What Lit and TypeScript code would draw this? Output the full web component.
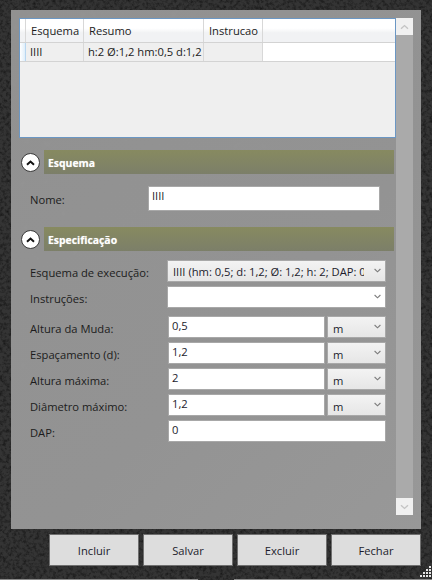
import { LitElement, html, css, svg } from "lit";
import { customElement } from "lit/decorators.js";

const chevronDown = html`<svg class="chev" width="7" height="5" viewBox="0 0 7 5"><path d="M.6 1 3.5 3.8 6.4 1" fill="none" stroke="#7c7c7c" stroke-width="1.1"/></svg>`;
const noise = (id: string, freq: number, a: number, b: number, c: number) => html`<svg class="tex" width="100%" height="100%" aria-hidden="true">
  <filter id=${id} x="0" y="0" width="100%" height="100%">
    <feTurbulence type="fractalNoise" baseFrequency=${freq} numOctaves="4" seed="7"/>
    <feColorMatrix type="matrix" values=${`0 0 0 0 ${c} 0 0 0 0 ${c} 0 0 0 0 ${c} ${a} 0 0 0 ${b}`}/>
  </filter>
  <rect width="100%" height="100%" filter=${`url(#${id})`}/>
</svg>`;

const grip = [
  [9, 0],
  [6, 3], [9, 3],
  [3, 6], [6, 6], [9, 6],
  [0, 9], [3, 9], [6, 9], [9, 9],
];

@customElement("app-root")
export class AppRoot extends LitElement {
  static styles = css`
    :host {
      display: block;
      width: 432px;
      height: 580px;
      position: relative;
      overflow: hidden;
      background: #343434;
      font-family: "Open Sans", "Noto Sans", sans-serif;
      font-size: 11.2px;
      color: #1c1c1c;
    }
    .tex { position: absolute; left: 0; top: 0; pointer-events: none; }
    .window {
      position: relative;
      display: flex;
      flex-direction: column;
      box-sizing: border-box;
      height: 580px;
      padding: 10px 11px 0 11px;
    }
    .panel {
      position: relative;
      box-sizing: border-box;
      height: 519px;
      width: 410px;
      padding: 8px 8px 14px 8px;
      display: flex;
      background: linear-gradient(135deg, #919191, #939393 60%, #989898);
    }
    .content { position: relative; width: 377px; display: flex; flex-direction: column; }
    .scroll {
      position: relative;
      width: 17px;
      display: flex;
      flex-direction: column;
      justify-content: space-between;
      background: #aaaaaa;
    }
    .sbtn {
      height: 17px;
      background: #f0f0f0;
      display: flex;
      align-items: center;
      justify-content: center;
    }
    .grid {
      box-sizing: border-box;
      height: 120px;
      border: 1px solid #6b97c4;
      background: #efefef;
      display: flex;
      flex-direction: column;
    }
    .gr { display: flex; box-sizing: border-box; border-bottom: 1px solid #d3d3d3; }
    .gr.head { height: 24px; background: linear-gradient(#ffffff 40%, #f1f2f4 60%); }
    .gr.row { height: 19px; }
    .gc { box-sizing: border-box; border-right: 1px solid #d8d8d8; padding-left: 4px; white-space: nowrap; overflow: hidden; }
    .head .gc { line-height: 24px; padding-left: 5px; }
    .row .gc { line-height: 18px; }
    .c0 { width: 6px; padding: 0 !important; }
    .row .c0 { background: linear-gradient(90deg, #ffffff, #dfeefa); border-right: 1px solid #b7d6f0; }
    .c1 { width: 58px; }
    .c2 { width: 120px; }
    .c3 { width: 59px; }
    .c4 { flex: 1; border-right: none; }
    .row .c4 { background: #fff; }
    .section { display: flex; align-items: center; height: 24px; padding-left: 2px; margin-top: 12px; }
    .section.second { margin-top: 16px; }
    .toggle {
      box-sizing: border-box;
      width: 19px;
      height: 19px;
      margin-top: 1px;
      border-radius: 50%;
      background: #fff;
      border: 1.5px solid #3a3a3a;
      margin-right: 4px;
      display: flex;
      align-items: center;
      justify-content: center;
    }
    .bar {
      width: 350px;
      height: 24px;
      box-sizing: border-box;
      padding-left: 4px;
      line-height: 26px;
      background: linear-gradient(#878a60, #7c7f69);
      color: #fff;
      font-weight: 700;
      font-size: 10.4px;
      text-shadow: 0 0 1px rgba(255, 255, 255, 0.5);
    }
    .fr { display: flex; height: 22px; margin-bottom: 4px; padding-left: 12px; }
    .lab { width: 136px; line-height: 26px; white-space: nowrap; margin-left: -1px; padding-right: 1px; }
    .nome { height: 25px; margin-top: 12px; margin-bottom: 0; }
    .nome .lab { width: 117px; line-height: 28px; }
    .ctl {
      box-sizing: border-box;
      height: 22px;
      border: 1px solid #a8a8a8;
      background: #fff;
      padding: 0 3px;
      white-space: nowrap;
      overflow: hidden;
      color: #1c1c2c;
    }
    .nome .ctl { width: 232px; height: 25px; line-height: 17px; }
    .combo { position: relative; width: 219px; padding-left: 5px; }
    .grad { background: linear-gradient(#f3f3f3, #e6e6e6); }
    .combo .txt { display: block; width: 191px; overflow: hidden; line-height: 21px; }
    .chev { position: absolute; right: 4px; top: 7px; }
    .input { width: 157px; margin-left: 1px; line-height: 17px; }
    .unit { position: relative; width: 59px; margin-left: 2px; padding-left: 5px; line-height: 24px; }
    .wide { width: 218px; margin-left: 1px; line-height: 17px; }
    .first { margin-top: 9px; }
    .gap { margin-bottom: 8px; }
    .buttons { display: flex; justify-content: flex-end; gap: 4px; margin-top: 5px; }
    .btn {
      box-sizing: border-box;
      width: 90px;
      height: 32px;
      background: #dddddd;
      border: 1px solid #6f6f6f;
      display: flex;
      align-items: center;
      justify-content: center;
      color: #1c1c2c;
    }
    .strip { margin: auto -11px 0; display: flex; justify-content: space-between; height: 1px; }
    .strip i { display: block; height: 1px; background: #8a8a8a; width: 198px; }
  `;

  private unitRow(label: string, value: string) {
    return html`<div class="fr">
      <div class="lab">${label}</div>
      <div class="ctl input">${value}</div>
      <div class="ctl unit grad">m${chevronDown}</div>
    </div>`;
  }

  render() {
    const up = (color: string, w: string) => html`<svg width="9" height="6" viewBox="0 0 9 6"><path d="M1 4.8 4.5 1.6 8 4.8" fill="none" stroke=${color} stroke-width=${w}/></svg>`;
    return html`
      ${noise("dark", 0.3, 1.1, -0.45, 0)}
      <div class="window">
        <div class="panel">
          ${noise("light", 0.1, 0.5, -0.22, 0.3)}
          <div class="content">
            <div class="grid">
              <div class="gr head">
                <div class="gc c0"></div>
                <div class="gc c1">Esquema</div>
                <div class="gc c2">Resumo</div>
                <div class="gc c3">Instrucao</div>
                <div class="gc c4"></div>
              </div>
              <div class="gr row">
                <div class="gc c0"></div>
                <div class="gc c1">IIII</div>
                <div class="gc c2">h:2 Ø:1,2 hm:0,5 d:1,2</div>
                <div class="gc c3"></div>
                <div class="gc c4"></div>
              </div>
            </div>

            <div class="section">
              <div class="toggle">${up("#111", "2")}</div>
              <div class="bar">Esquema</div>
            </div>
            <div class="fr nome">
              <div class="lab">Nome:</div>
              <div class="ctl">IIII</div>
            </div>

            <div class="section second">
              <div class="toggle">${up("#111", "2")}</div>
              <div class="bar">Especificação</div>
            </div>
            <div class="fr first">
              <div class="lab">Esquema de execução:</div>
              <div class="ctl combo grad"><span class="txt">IIII (hm: 0,5; d: 1,2; Ø: 1,2; h: 2; DAP: 0</span>${chevronDown}</div>
            </div>
            <div class="fr gap">
              <div class="lab">Instruções:</div>
              <div class="ctl combo">${chevronDown}</div>
            </div>
            ${this.unitRow("Altura da Muda:", "0,5")}
            ${this.unitRow("Espaçamento (d):", "1,2")}
            ${this.unitRow("Altura máxima:", "2")}
            ${this.unitRow("Diâmetro máximo:", "1,2")}
            <div class="fr">
              <div class="lab">DAP:</div>
              <div class="ctl wide">0</div>
            </div>
          </div>
          <div class="scroll">
            <div class="sbtn">${up("#c4c4c4", "1.4")}</div>
            <div class="sbtn"><svg width="9" height="6" viewBox="0 0 9 6"><path d="M1 1.2 4.5 4.4 8 1.2" fill="none" stroke="#c4c4c4" stroke-width="1.4"/></svg></div>
          </div>
        </div>
        <div class="buttons">
          <div class="btn">Incluir</div>
          <div class="btn">Salvar</div>
          <div class="btn">Excluir</div>
          <div class="btn">Fechar</div>
        </div>
        <div class="strip"><i></i><i></i></div>
      </div>
      <svg class="tex" style="left:420px;top:566px" width="11" height="11" viewBox="0 0 11 11">
        ${grip.map(([x, y]) => svg`<rect x=${x} y=${y} width="2" height="2" fill="#e4e4e4"/>`)}
      </svg>
    `;
  }
}
